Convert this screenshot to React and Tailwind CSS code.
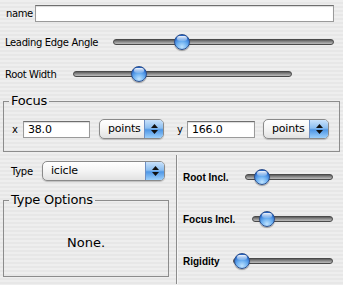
import React from 'react';

// Aqua-style inspector panel

function Slider({ width, value }) {
    // knob centre sits along the track, value 0..1
    return (
        <div className="relative h-[16px]" style={{ width }}>
            <div className="absolute left-0 right-0 top-[5px] h-[6px] rounded-full border border-[#4a4a4a] bg-[linear-gradient(180deg,#5c5c5c_0%,#8c8c8c_45%,#bdbdbd_100%)]" />
            <div
                className="absolute top-0 w-[16px] h-[16px] rounded-full border border-[#2c4f8c] bg-[radial-gradient(circle_at_50%_85%,#bfe3ff_0%,#6aaef0_40%,#2a6fd2_75%,#1d4fa8_100%)] shadow-[0_1px_1px_rgba(0,0,0,0.35)]"
                style={{ left: value * width - 8 }}
            >
                <div className="mx-auto mt-[1px] w-[10px] h-[5px] rounded-full bg-[linear-gradient(180deg,rgba(255,255,255,0.95),rgba(255,255,255,0.15))]" />
            </div>
        </div>
    );
}

function TextField({ width, value = '' }) {
    return (
        <div
            className="h-[17px] bg-white border border-[#9a9a9a] border-t-[#6e6e6e] shadow-[inset_0_1px_1px_rgba(0,0,0,0.15)] pl-[4px] text-[11px] leading-[15px] tracking-[-0.2px] text-black"
            style={{ width }}
        >
            {value}
        </div>
    );
}

function Popup({ width, label }) {
    return (
        <div
            className="flex h-[20px] rounded-[5px] border border-[#8a8a8a] overflow-hidden shadow-[0_1px_1px_rgba(0,0,0,0.2)] bg-[linear-gradient(180deg,#ffffff_0%,#f4f4f4_50%,#e2e2e2_100%)]"
            style={{ width }}
        >
            <div className="flex-1 pl-[8px] text-[11px] leading-[18px] tracking-[-0.2px] text-black">{label}</div>
            <div className="w-[19px] flex flex-col items-center justify-center gap-[2px] border-l border-[#6d8fc4] bg-[linear-gradient(180deg,#c9e2fb_0%,#8cbef0_45%,#4f97e6_55%,#9dd0fb_100%)]">
                <svg width="7" height="4" viewBox="0 0 7 4"><path d="M3.5 0L7 4H0z" fill="#111" /></svg>
                <svg width="7" height="4" viewBox="0 0 7 4"><path d="M0 0h7L3.5 4z" fill="#111" /></svg>
            </div>
        </div>
    );
}

export default function App() {
    return (
        <div className="w-[343px] h-[285px] overflow-hidden text-black font-['DejaVu_Sans',sans-serif] bg-[repeating-linear-gradient(180deg,#eeeeee_0px,#eeeeee_2px,#e7e7e7_2px,#e7e7e7_4px)]">
            {/* name */}
            <div className="flex items-center pt-[5px]">
                <span className="w-[35px] pl-[6px] text-[10px] tracking-[-0.4px]">name</span>
                <TextField width={299} />
            </div>

            {/* angle + width */}
            <div className="flex items-center mt-[12px] h-[16px]">
                <span className="w-[113px] pl-[5px] text-[10px] tracking-[-0.35px]">Leading Edge Angle</span>
                <Slider width={221} value={0.31} />
            </div>
            <div className="flex items-center mt-[16px] h-[16px]">
                <span className="w-[73px] pl-[5px] text-[10px] tracking-[-0.35px]">Root Width</span>
                <Slider width={219} value={0.3} />
            </div>

            {/* Focus */}
            <fieldset className="mt-[12px] ml-[3px] w-[337px] h-[58px] border border-[#8c8c8c]">
                <legend className="ml-[5px] px-[2px] text-[13px] leading-[14px] tracking-[-0.2px]">Focus</legend>
                <div className="flex items-center mt-[11px]">
                    <span className="w-[19px] pl-[8px] text-[10px]">x</span>
                    <TextField width={67} value="38.0" />
                    <div className="ml-[9px]"><Popup width={65} label="points" /></div>
                    <span className="w-[23px] pl-[13px] text-[10px]">y</span>
                    <TextField width={68} value="166.0" />
                    <div className="ml-[8px]"><Popup width={66} label="points" /></div>
                </div>
            </fieldset>

            {/* lower section */}
            <div className="flex">
                <div className="w-[176px] pt-[9px]">
                    <div className="flex items-center">
                        <span className="w-[42px] pl-[11px] text-[10px] tracking-[-0.3px]">Type</span>
                        <Popup width={123} label="icicle" />
                    </div>
                    <fieldset className="mt-[12px] ml-[3px] w-[166px] h-[84px] border border-[#8c8c8c]">
                        <legend className="ml-[5px] px-[2px] text-[13px] leading-[14px] tracking-[-0.2px]">Type Options</legend>
                        <div className="text-center text-[13px] mt-[26px]">None.</div>
                    </fieldset>
                </div>
                <div className="mt-[3px] h-[129px] w-[2px] border-l border-[#8c8c8c] bg-[#f6f6f6]" />
                <div className="flex-1 pl-[5px] pt-[17px] flex flex-col gap-[26px] font-['Liberation_Sans',sans-serif]">
                    <div className="flex items-center h-[16px]">
                        <span className="w-[62px] text-[10px] font-bold">Root Incl.</span>
                        <Slider width={88} value={0.19} />
                    </div>
                    <div className="flex items-center h-[16px]">
                        <span className="w-[69px] text-[10px] font-bold">Focus Incl.</span>
                        <Slider width={81} value={0.18} />
                    </div>
                    <div className="flex items-center h-[16px]">
                        <span className="w-[50px] text-[10px] font-bold">Rigidity</span>
                        <Slider width={100} value={0.09} />
                    </div>
                </div>
            </div>
        </div>
    );
}
